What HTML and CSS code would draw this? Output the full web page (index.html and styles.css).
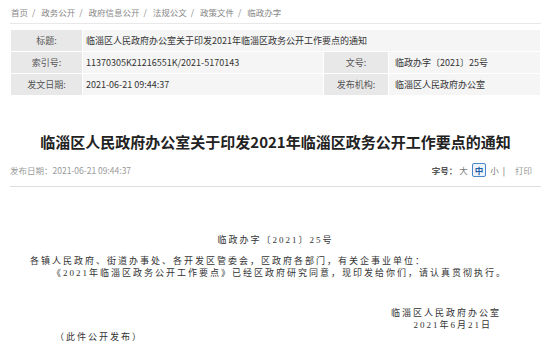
FILE: index.html
```html
<!DOCTYPE html>
<html>
<head>
    <meta charset="utf-8">
    <title>临淄区人民政府办公室关于印发2021年临淄区政务公开工作要点的通知</title>
    <link rel="stylesheet" href="styles.css">
</head>
<body>
    <div class="page">
        <div class="crumbs">
            <a href="#">首页</a><span class="sep">/</span>
            <a href="#">政务公开</a><span class="sep">/</span>
            <a href="#">政府信息公开</a><span class="sep">/</span>
            <a href="#">法规公文</a><span class="sep">/</span>
            <a href="#">政策文件</a><span class="sep">/</span>
            <a href="#">临政办字</a>
        </div>

        <table class="info">
            <tr>
                <th>标题:</th>
                <td colspan="3">临淄区人民政府办公室关于印发2021年临淄区政务公开工作要点的通知</td>
            </tr>
            <tr>
                <th>索引号:</th>
                <td>11370305K21216551K/2021-5170143</td>
                <th class="th-right">文号:</th>
                <td class="td-right">临政办字〔2021〕25号</td>
            </tr>
            <tr>
                <th>发文日期:</th>
                <td>2021-06-21 09:44:37</td>
                <th class="th-right">发布机构:</th>
                <td class="td-right">临淄区人民政府办公室</td>
            </tr>
        </table>

        <h1 class="title">临淄区人民政府办公室关于印发2021年临淄区政务公开工作要点的通知</h1>

        <div class="meta">
            <span class="pub-date">发布日期：2021-06-21 09:44:37</span>
            <span class="tools">
                <b>字号：</b>
                <a href="#">大</a>
                <a href="#" class="active">中</a>
                <a href="#">小</a>
                <span class="bar">|</span>
                <a href="#" class="print">打印</a>
            </span>
        </div>

        <div class="article">
            <p class="doc-no">临政办字〔2021〕25号</p>
            <p class="to">各镇人民政府、街道办事处、各开发区管委会，区政府各部门，有关企事业单位：</p>
            <p class="indent">《2021年临淄区政务公开工作要点》已经区政府研究同意，现印发给你们，请认真贯彻执行。</p>
            <p class="sign">临淄区人民政府办公室</p>
            <p class="sign-date">2021年6月21日</p>
            <p class="note">（此件公开发布）</p>
        </div>
    </div>
</body>
</html>
```

FILE: styles.css
```css
* {
    margin: 0;
    padding: 0;
    box-sizing: border-box;
}

body {
    background: #fff;
    font-family: "Noto Sans CJK SC", "Noto Sans", sans-serif;
    color: #333;
    overflow: hidden;
}

a {
    color: inherit;
    text-decoration: none;
}

.page {
    width: 531px;
    margin-left: 10px;
}

/* breadcrumb */
.crumbs {
    height: 24px;
    line-height: 24px;
    padding-left: 1px;
    font-size: 8.5px;
    color: #888;
    border-bottom: 1px solid #e8e8e8;
}

.crumbs .sep {
    margin: 0 4px;
}

/* info table */
.info {
    width: 100%;
    margin-top: 5px;
    border-collapse: collapse;
    font-size: 9px;
}

.info th,
.info td {
    height: 22px;
    border: 1px solid #fff;
    font-weight: normal;
}

.info th {
    width: 72px;
    background: #e8e8e8;
    color: #555;
    text-align: center;
}

.info td {
    background: #f5f5f5;
    color: #333;
    padding-left: 3px;
}

.info .th-right {
    width: 65px;
}

.info .td-right {
    width: 152px;
    padding-left: 6px;
}

/* heading */
.title {
    margin-top: 36px;
    font-size: 15px;
    line-height: 20px;
    text-align: center;
    color: #222;
    font-weight: bold;
}

.meta {
    display: flex;
    justify-content: space-between;
    align-items: center;
    margin-top: 11px;
    padding-bottom: 9px;
    font-size: 8.5px;
    color: #999;
    border-bottom: 1px solid #ddd;
}

.tools {
    display: flex;
    align-items: center;
    gap: 4px;
    margin-right: 9px;
    color: #777;
}

.tools b {
    color: #555;
    margin-right: -2px;
}

.tools .active {
    border: 1px solid #4a86c8;
    background: #eef4fb;
    color: #1f5fa6;
    font-weight: bold;
    padding: 0 2px;
    border-radius: 2px;
}

.tools .bar {
    color: #555;
    margin-right: 6px;
}

.tools .print {
    color: #999;
}

/* article body */
.article {
    font-family: "Liberation Serif", "Noto Sans CJK SC", serif;
    font-size: 9px;
    letter-spacing: 2px;
    color: #333;
    line-height: 12px;
}

.doc-no {
    margin-top: 47px;
    text-align: center;
}

.to {
    margin-top: 9px;
    padding-left: 20px;
}

.indent {
    padding-left: 42px;
}

.sign {
    margin-top: 28px;
    text-align: right;
    padding-right: 40px;
}

.sign-date {
    margin-top: 0;
    text-align: right;
    padding-right: 49px;
}

.note {
    margin-top: 0;
    padding-left: 45px;
}
```
